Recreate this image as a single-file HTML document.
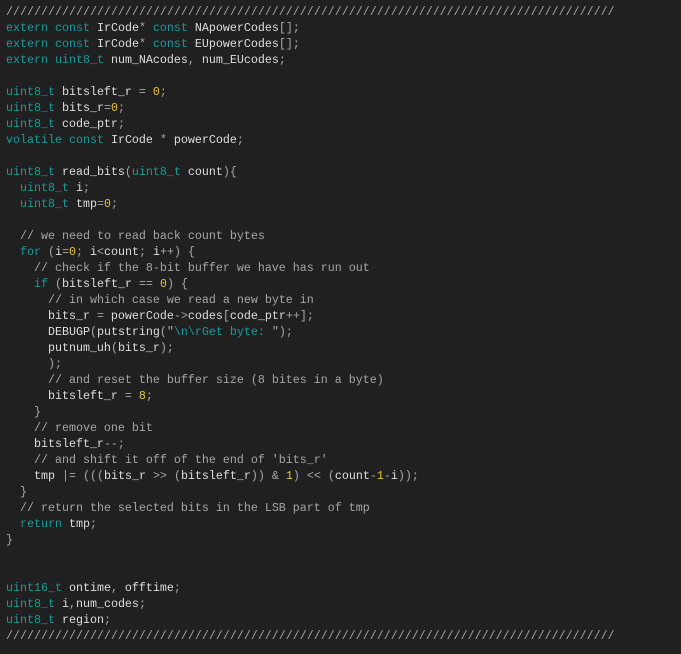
<!DOCTYPE html>
<html><head><meta charset="utf-8"><style>
html,body{margin:0;padding:0;background:#202020;width:681px;height:654px;overflow:hidden}
pre{margin:0;padding:4px 0 0 6px;font-family:"Liberation Mono",monospace;font-size:11.67px;line-height:16px;color:#dedede;white-space:pre}
.k{color:#1b9a9c}.c{color:#a6a6a6}.n{color:#e6c33a}.p{color:#a8a8a8}.s{color:#1b9a9c}
</style></head><body><pre><span class="c">///////////////////////////////////////////////////////////////////////////////////////</span>
<span class="k">extern</span> <span class="k">const</span> IrCode<span class="p">*</span> <span class="k">const</span> NApowerCodes<span class="p">[];</span>
<span class="k">extern</span> <span class="k">const</span> IrCode<span class="p">*</span> <span class="k">const</span> EUpowerCodes<span class="p">[];</span>
<span class="k">extern</span> <span class="k">uint8_t</span> num_NAcodes<span class="p">,</span> num_EUcodes<span class="p">;</span>

<span class="k">uint8_t</span> bitsleft_r <span class="p">=</span> <span class="n">0</span><span class="p">;</span>
<span class="k">uint8_t</span> bits_r<span class="p">=</span><span class="n">0</span><span class="p">;</span>
<span class="k">uint8_t</span> code_ptr<span class="p">;</span>
<span class="k">volatile</span> <span class="k">const</span> IrCode <span class="p">*</span> powerCode<span class="p">;</span>

<span class="k">uint8_t</span> read_bits<span class="p">(</span><span class="k">uint8_t</span> count<span class="p">){</span>
  <span class="k">uint8_t</span> i<span class="p">;</span>
  <span class="k">uint8_t</span> tmp<span class="p">=</span><span class="n">0</span><span class="p">;</span>

  <span class="c">// we need to read back count bytes</span>
  <span class="k">for</span> <span class="p">(</span>i<span class="p">=</span><span class="n">0</span><span class="p">;</span> i<span class="p">&lt;</span>count<span class="p">;</span> i<span class="p">++)</span> <span class="p">{</span>
    <span class="c">// check if the 8-bit buffer we have has run out</span>
    <span class="k">if</span> <span class="p">(</span>bitsleft_r <span class="p">==</span> <span class="n">0</span><span class="p">)</span> <span class="p">{</span>
      <span class="c">// in which case we read a new byte in</span>
      bits_r <span class="p">=</span> powerCode<span class="p">-&gt;</span>codes<span class="p">[</span>code_ptr<span class="p">++];</span>
      DEBUGP<span class="p">(</span>putstring<span class="p">(</span><span class="p">"</span><span class="s">\n\rGet byte: </span><span class="p">");</span>
      putnum_uh<span class="p">(</span>bits_r<span class="p">);</span>
      <span class="p">);</span>
      <span class="c">// and reset the buffer size (8 bites in a byte)</span>
      bitsleft_r <span class="p">=</span> <span class="n">8</span><span class="p">;</span>
    <span class="p">}</span>
    <span class="c">// remove one bit</span>
    bitsleft_r<span class="p">--;</span>
    <span class="c">// and shift it off of the end of 'bits_r'</span>
    tmp <span class="p">|=</span> <span class="p">(((</span>bits_r <span class="p">&gt;&gt;</span> <span class="p">(</span>bitsleft_r<span class="p">))</span> <span class="p">&amp;</span> <span class="n">1</span><span class="p">)</span> <span class="p">&lt;&lt;</span> <span class="p">(</span>count<span class="p">-</span><span class="n">1</span><span class="p">-</span>i<span class="p">));</span>
  <span class="p">}</span>
  <span class="c">// return the selected bits in the LSB part of tmp</span>
  <span class="k">return</span> tmp<span class="p">;</span>
<span class="p">}</span>


<span class="k">uint16_t</span> ontime<span class="p">,</span> offtime<span class="p">;</span>
<span class="k">uint8_t</span> i<span class="p">,</span>num_codes<span class="p">;</span>
<span class="k">uint8_t</span> region<span class="p">;</span>
<span class="c">///////////////////////////////////////////////////////////////////////////////////////</span></pre></body></html>
